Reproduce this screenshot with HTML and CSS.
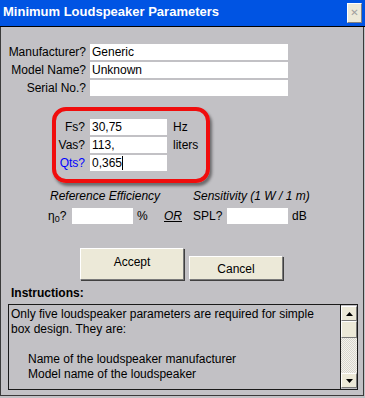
FILE: index.html
```html
<!DOCTYPE html>
<html lang="en">
<head>
  <meta charset="UTF-8" />
  <title>Minimum Loudspeaker Parameters</title>
  <link rel="stylesheet" href="styles.css">
</head>
<body>
  <div class="titlebar">
    <span class="title">Minimum Loudspeaker Parameters</span>
    <button class="close" type="button">&#x2715;</button>
  </div>
  <div class="frame">
    <div class="ident">
      <label>Manufacturer?</label>
      <div class="field">Generic</div>
      <label>Model Name?</label>
      <div class="field">Unknown</div>
      <label>Serial No.?</label>
      <div class="field"></div>
    </div>

    <div class="highlight">
      <label>Fs?</label>
      <div class="field">30,75</div>
      <span class="unit">Hz</span>
      <label>Vas?</label>
      <div class="field">113,</div>
      <span class="unit">liters</span>
      <label class="active">Qts?</label>
      <div class="field">0,365<span class="caret"></span></div>
      <span class="unit"></span>
    </div>

    <div class="efficiency">
      <span class="heading first">Reference Efficiency</span>
      <span class="heading second">Sensitivity (1 W / 1 m)</span>
      <label>&eta;<sub>0</sub>?</label>
      <div class="field"></div>
      <span class="unit">%</span>
      <span class="or">OR</span>
      <label>SPL?</label>
      <div class="field"></div>
      <span class="unit">dB</span>
    </div>

    <div class="buttons">
      <button type="button" class="btn accept">Accept</button>
      <button type="button" class="btn cancel">Cancel</button>
    </div>

    <h4>Instructions:</h4>
    <div class="instructions">
      <div class="text">
        <p>Only five loudspeaker parameters are required for simple</p>
        <p>box design. They are:</p>
        <p>&nbsp;</p>
        <p class="indent">Name of the loudspeaker manufacturer</p>
        <p class="indent">Model name of the loudspeaker</p>
      </div>
      <div class="scrollbar">
        <div class="sb-btn"><svg width="7" height="4" viewBox="0 0 7 4"><path d="M0 4h7L3.5 0z" fill="#000"/></svg></div>
        <div class="sb-btn thumb"></div>
        <div class="track"></div>
        <div class="sb-btn"><svg width="7" height="4" viewBox="0 0 7 4"><path d="M0 0h7L3.5 4z" fill="#000"/></svg></div>
      </div>
    </div>
  </div>
</body>
</html>
```

FILE: styles.css
```css
* {
  margin: 0;
  padding: 0;
  box-sizing: border-box;
}
body {
  background: #c2c1c5;
  font-family: 'Liberation Sans', Arial, sans-serif;
  font-size: 12px;
  color: #000;
  width: 365px;
  height: 398px;
  overflow: hidden;
}
.titlebar {
  height: 27px;
  background: #0054e3;
  border-bottom: 1px solid #000;
  display: flex;
  align-items: flex-start;
  justify-content: space-between;
  padding: 4px 3px 0 3px;
}
.title {
  color: #fff;
  font-weight: bold;
  font-size: 13px;
  line-height: 15px;
}
.close {
  width: 15px;
  height: 20px;
  margin-top: -1px;
  background: #ece9d8;
  border: 1px solid;
  border-color: #fff #808080 #808080 #fff;
  color: #a0a0a0;
  font-size: 10px;
  font-weight: bold;
  line-height: 16px;
  font-family: 'DejaVu Sans', sans-serif;
}
.frame {
  width: 364px;
  height: 369px;
  border: 1px solid #3a3a3a;
  border-top: none;
  padding-top: 17px;
}
label {
  text-align: right;
  line-height: 16px;
}
.field {
  background: #fff;
  height: 16px;
  line-height: 16px;
  padding-left: 2px;
  white-space: nowrap;
}
.caret {
  display: inline-block;
  width: 1px;
  height: 14px;
  background: #000;
  vertical-align: -3px;
}
.ident {
  display: grid;
  grid-template-columns: 85px 198px;
  column-gap: 4px;
  row-gap: 2px;
}
.highlight {
  margin: 11px 0 0 51px;
  width: 158px;
  height: 76px;
  border: 4px solid #f00d0d;
  border-radius: 14px;
  box-shadow: 2px 3px 3px rgba(0, 0, 0, 0.45);
  padding-top: 8px;
  display: grid;
  grid-template-columns: 29px 77px auto;
  grid-auto-rows: 16px;
  column-gap: 5px;
  row-gap: 2px;
}
.highlight .unit {
  padding-left: 1px;
  line-height: 16px;
  white-space: nowrap;
}
.highlight label {
  white-space: nowrap;
}
.active {
  color: #0000ff;
}
.efficiency {
  margin: 6px 0 0 47px;
  display: grid;
  grid-template-columns: 24px 61px 29px 31px 34px 61px auto;
  grid-template-rows: 14px 16px;
  row-gap: 5px;
  line-height: 16px;
}
.heading {
  font-style: italic;
  line-height: 14px;
  white-space: nowrap;
}
.heading.first {
  grid-column: 1 / 5;
  padding-left: 2px;
}
.heading.second {
  grid-column: 5 / 8;
}
.efficiency label {
  text-align: left;
}
.efficiency sub {
  font-size: 9px;
  vertical-align: -2px;
}
.efficiency .unit {
  padding-left: 4px;
}
.or {
  font-style: italic;
  text-decoration: underline;
  padding-left: 2px;
}
.buttons {
  display: flex;
  align-items: flex-end;
  gap: 5px;
  margin: 24px 0 0 79px;
}
.btn {
  font-family: 'Liberation Sans', Arial, sans-serif;
  font-size: 12px;
  background: #ece9d8;
  border: 1px solid;
  border-color: #fff #7a7a7a #7a7a7a #fff;
  box-shadow: 1px 1px 0 #404040;
  color: #000;
}
.accept {
  width: 104px;
  height: 32px;
  padding-bottom: 5px;
}
.cancel {
  width: 94px;
  height: 24px;
  padding-top: 2px;
}
h4 {
  font-size: 12px;
  font-weight: bold;
  line-height: 14px;
  margin: 6px 0 0 10px;
}
.instructions {
  margin: 4px 0 0 7px;
  width: 350px;
  height: 86px;
  border: 1px solid #1a1a1a;
  display: flex;
}
.text {
  flex: 1;
  border-right: 1px solid #1a1a1a;
  padding: 2px 0 0 2px;
  line-height: 15px;
  overflow: hidden;
  white-space: nowrap;
}
.indent {
  padding-left: 17px;
}
.scrollbar {
  width: 16px;
  display: flex;
  flex-direction: column;
  padding: 1px 0;
}
.sb-btn {
  height: 15px;
  background: #ece9d8;
  border: 1px solid;
  border-color: #fff #7a7a7a #7a7a7a #fff;
  display: flex;
  align-items: center;
  justify-content: center;
}
.thumb {
  height: 17px;
}
.track {
  flex: 1;
  background-color: #f4f3ee;
  background-image: repeating-conic-gradient(#d8d6ce 0 25%, #f4f3ee 0 50%);
  background-size: 2px 2px;
}
```
